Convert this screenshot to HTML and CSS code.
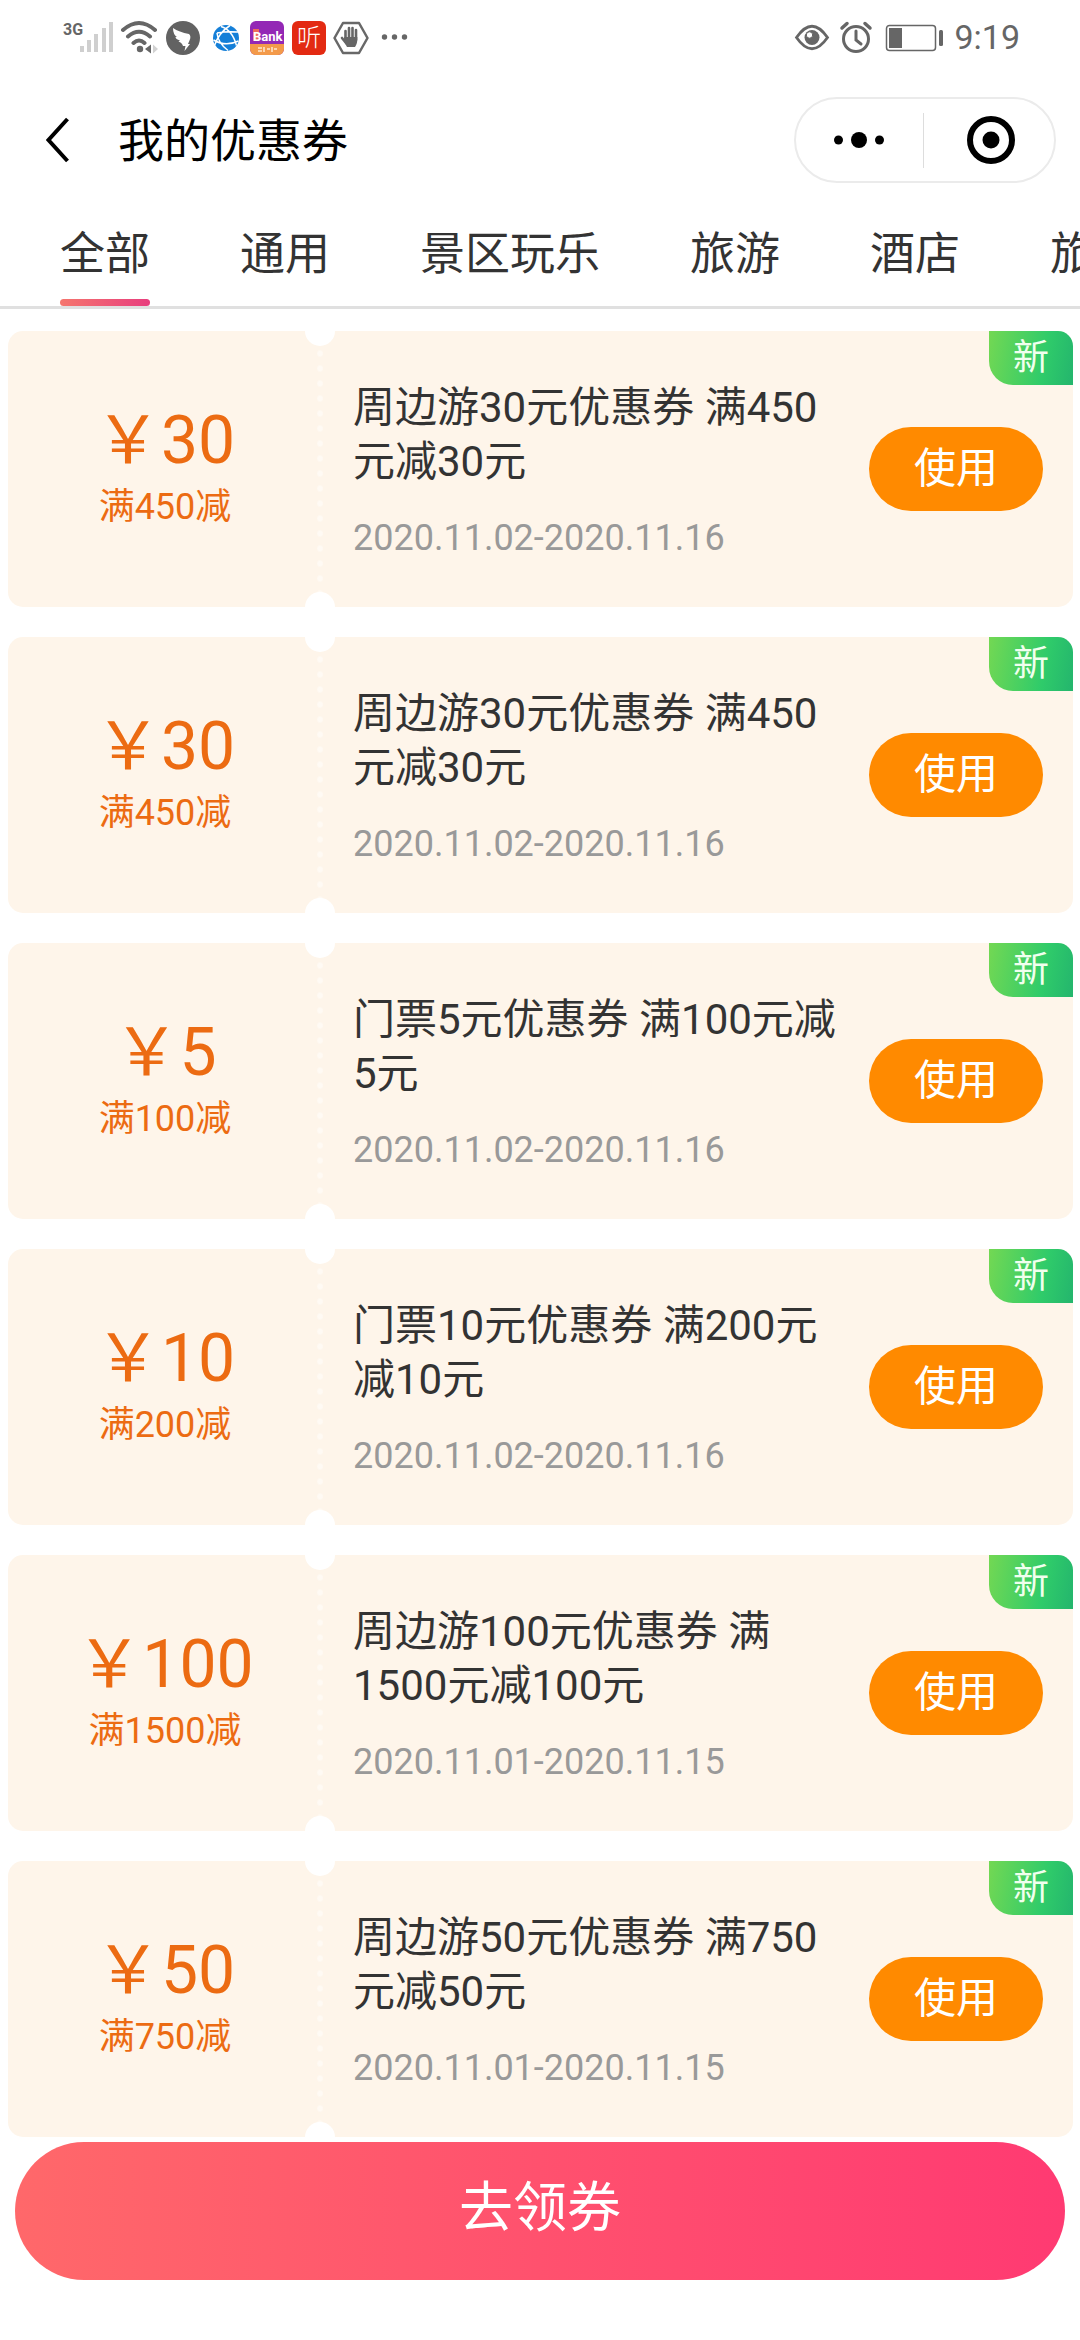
FILE: index.html
```html
<!DOCTYPE html>
<html lang="zh-CN">
<head>
<meta charset="utf-8">
<meta name="viewport" content="width=device-width, initial-scale=1">
<title>我的优惠券</title>
<link rel="stylesheet" href="styles.css">
</head>
<body>
<div class="page">
  <div class="status">
    <svg class="status-left" viewBox="0 0 360 44" width="360" height="44" aria-hidden="true">
      <text x="3" y="20" class="net">3G</text>
      <g fill="#cfcfcf"><path d="M20 31h4v6h-4zM27 25h4v12h-4zM34 19h4v18h-4zM42 13h4v24h-4zM49 7h4v30h-4z"/></g>
      <g fill="none" stroke="#666" stroke-width="4" stroke-linecap="round">
        <path d="M63 15Q79 1 95 15M68 21.500Q79 12 90 21.500M73.500 28Q79 23 84.500 28"/>
      </g>
      <circle cx="80" cy="34" r="3.200" fill="#666"/>
      <path d="M85 34l6-4.500v9z" fill="#666"/><path d="M93 29.500l5 4.500-5 4.500z" fill="#d2d2d2"/>
      <circle cx="123" cy="23" r="17" fill="#626262"/>
      <path d="M113 13q6 4 16 6 2.500 2 .5 6.500l-1.500 3.500h2l-5.500 7 1-5h-2.500q-1-3.500-4.500-4.500l1.500-1q-4.500-1.500-4.500-3.500h1.500q-4-2.500-4-9z" fill="#fff"/>
      <circle cx="166" cy="23" r="13" fill="#147fd8"/>
      <g fill="none" stroke="#fff" stroke-width="1.500"><path d="M170 10.500q-11 7-15.500 20M157 18q1 10 11 17.500M153.500 25q12 7 25 1M161 11.500q11 3 15.500 19M178 17q-11-1-21 1"/></g>
      <rect x="190" y="6" width="34" height="34" rx="6" fill="#9328b5"/>
      <path d="M190 29h34v5a6 6 0 0 1-6 6h-22a6 6 0 0 1-6-6z" fill="#f39a4a"/>
      <path d="M193 14h6v12h-6z" fill="#ee6c5e"/>
      <text x="193" y="26" class="bank">Bank</text>
      <path d="M198 33h4M204 32v5M207 34h3M212 32v5M214 34h3M198 36h4" stroke="#ffe9cf" stroke-width="1.500"/>
      <rect x="232" y="6" width="34" height="34" rx="6" fill="#e32a12"/>
      <text x="237" y="31" class="ting">听</text>
      <path d="M283 8h16l8.500 15-8.500 15h-16l-8.500-15z" fill="none" stroke="#686868" stroke-width="2.500" stroke-linejoin="round"/>
      <path d="M285.500 16v9M289 13v11M292.500 13v11M296 15v10M282 23l4 5" fill="none" stroke="#666" stroke-width="2.600" stroke-linecap="round"/>
      <path d="M284.200 22h13.100q.5 6-2.300 10h-8q-2-3-2.800-6z" fill="#666"/>
      <g fill="#666"><circle cx="324.500" cy="22" r="2.700"/><circle cx="334.500" cy="22" r="2.700"/><circle cx="344.500" cy="22" r="2.700"/></g>
    </svg>
    <div class="status-right">
      <svg viewBox="0 0 150 32" width="150" height="32" aria-hidden="true">
        <g fill="none" stroke="#666" stroke-width="3">
          <path d="M2.500 16.500Q18 -6 33.500 16.500Q18 39 2.500 16.500z" stroke-width="2.800"/>
          <circle cx="62" cy="18" r="12.500"/>
          <path d="M48 7l5-4.500M71 2.500l5 4.500" stroke-linecap="round" stroke-width="3.500"/>
          <path d="M62 10v9l5 4" stroke-linecap="round"/>
          <rect x="92.500" y="4.500" width="49" height="25" rx="3" stroke-width="1.500"/>
        </g>
        <circle cx="18" cy="16.500" r="7.500" fill="#666"/><circle cx="15.500" cy="14" r="3.200" fill="#fff" stroke="#666"/>
        <path d="M95 7h13v20h-13z" fill="#666"/><rect x="145" y="9" width="4" height="16" rx="1.500" fill="#666"/>
      </svg>
      <time class="clock">9:19</time>
    </div>
  </div>

  <header class="bar">
    <button class="back" type="button" aria-label="返回">
      <svg viewBox="0 0 24 46" width="24" height="46"><path d="M21.500 2L2.500 23l19 21" fill="none" stroke="#000" stroke-width="4"/></svg>
    </button>
    <h1 class="title">我的优惠券</h1>
    <div class="capsule">
      <button class="cap-btn" type="button" aria-label="更多">
        <svg viewBox="0 0 50 18" width="50" height="18"><circle cx="4.500" cy="9" r="4.500"/><circle cx="25" cy="9" r="8"/><circle cx="45.500" cy="9" r="4.500"/></svg>
      </button>
      <span class="cap-line"></span>
      <button class="cap-btn cap-close" type="button" aria-label="关闭">
        <svg viewBox="0 0 48 48" width="48" height="48"><circle cx="24" cy="24" r="21" fill="none" stroke="#000" stroke-width="6"/><circle cx="24" cy="24" r="8.500"/></svg>
      </button>
    </div>
  </header>

  <nav class="tabs">
    <a class="tab tab-on" href="#all">全部</a>
    <a class="tab" href="#general">通用</a>
    <a class="tab" href="#scenic">景区玩乐</a>
    <a class="tab" href="#travel">旅游</a>
    <a class="tab" href="#hotel">酒店</a>
    <a class="tab" href="#trip">旅</a>
  </nav>

  <main class="list">
    <article class="coupon">
      <div class="worth"><strong class="price">￥30</strong><span class="rule">满450减</span></div>
      <i class="tear"></i>
      <div class="info"><h2 class="name">周边游30元优惠券 满450元减30元</h2><p class="date">2020.11.02-2020.11.16</p></div>
      <button class="use" type="button">使用</button>
      <span class="badge">新</span>
    </article>
    <article class="coupon">
      <div class="worth"><strong class="price">￥30</strong><span class="rule">满450减</span></div>
      <i class="tear"></i>
      <div class="info"><h2 class="name">周边游30元优惠券 满450元减30元</h2><p class="date">2020.11.02-2020.11.16</p></div>
      <button class="use" type="button">使用</button>
      <span class="badge">新</span>
    </article>
    <article class="coupon">
      <div class="worth"><strong class="price">￥5</strong><span class="rule">满100减</span></div>
      <i class="tear"></i>
      <div class="info"><h2 class="name">门票5元优惠券 满100元减5元</h2><p class="date">2020.11.02-2020.11.16</p></div>
      <button class="use" type="button">使用</button>
      <span class="badge">新</span>
    </article>
    <article class="coupon">
      <div class="worth"><strong class="price">￥10</strong><span class="rule">满200减</span></div>
      <i class="tear"></i>
      <div class="info"><h2 class="name">门票10元优惠券 满200元减10元</h2><p class="date">2020.11.02-2020.11.16</p></div>
      <button class="use" type="button">使用</button>
      <span class="badge">新</span>
    </article>
    <article class="coupon">
      <div class="worth"><strong class="price">￥100</strong><span class="rule">满1500减</span></div>
      <i class="tear"></i>
      <div class="info"><h2 class="name">周边游100元优惠券 满1500元减100元</h2><p class="date">2020.11.01-2020.11.15</p></div>
      <button class="use" type="button">使用</button>
      <span class="badge">新</span>
    </article>
    <article class="coupon">
      <div class="worth"><strong class="price">￥50</strong><span class="rule">满750减</span></div>
      <i class="tear"></i>
      <div class="info"><h2 class="name">周边游50元优惠券 满750元减50元</h2><p class="date">2020.11.01-2020.11.15</p></div>
      <button class="use" type="button">使用</button>
      <span class="badge">新</span>
    </article>
  </main>

  <footer class="foot"><button class="claim" type="button">去领券</button></footer>
</div>
</body>
</html>
```
FILE: styles.css
```css
* { box-sizing: border-box; }
body {
  margin: 0;
  background: #fff;
  color: #333;
  font-family: Roboto, "Noto Sans CJK SC", sans-serif;
}
h1, h2, p { margin: 0; font-weight: 400; }
button { border: 0; padding: 0; background: none; font: inherit; color: inherit; }
svg { display: block; }
.page { overflow-x: clip; }

/* status bar */
.status {
  display: flex;
  justify-content: space-between;
  align-items: center;
  height: 74px;
  padding: 0 60px;
}
.status-right { display: flex; align-items: center; gap: 10px; }
.clock { color: #666; font-size: 34px; line-height: 40px; }
.net { font: 700 16px Roboto, sans-serif; fill: #666; }
.bank { font: 700 13px Roboto, sans-serif; fill: #fff; }
.ting { font: 300 24px "Noto Sans CJK SC", sans-serif; fill: #fff; }

/* title bar */
.bar {
  display: flex;
  align-items: center;
  height: 132px;
  padding: 0 24px 0 46px;
}
.title { flex: 1; margin-left: 48px; padding-top: 2px; color: #000; font-size: 46px; line-height: 60px; }
.capsule {
  display: flex;
  align-items: center;
  width: 262px;
  height: 86px;
  border: 2px solid #ebebeb;
  border-radius: 43px;
}
.cap-btn { display: flex; flex: 1; justify-content: center; }
.cap-close { padding-left: 4px; }
.cap-line { width: 1px; height: 55px; background: #ddd; }

/* category tabs */
.tabs {
  display: flex;
  height: 103px;
  padding: 0 15px;
  overflow: hidden;
  border-bottom: 3px solid #e0e0e0;
}
.tab {
  display: flex;
  flex: none;
  flex-direction: column;
  justify-content: space-between;
  margin: 0 45px;
  padding-top: 19px;
  color: #333;
  font-size: 45px;
  line-height: 60px;
  text-decoration: none;
}
.tab-on::after {
  content: "";
  height: 7px;
  border-radius: 4px;
  background: linear-gradient(90deg, #f5766e, #e83e7e);
}

/* coupons */
.list { display: flex; flex-direction: column; gap: 30px; padding: 22px 7px 0 8px; }
.coupon {
  position: relative;
  display: flex;
  align-items: center;
  min-height: 276px;
  padding-right: 30px;
  border-radius: 15px;
  background: #fef5ea;
}
.worth {
  display: flex;
  flex-direction: column;
  align-items: center;
  width: 309px;
  padding-left: 5px;
  color: #ec6b12;
}
.price { font-size: 66px; font-weight: 400; line-height: 76px; }
.rule { font-size: 36px; line-height: 56px; }
.tear {
  position: relative;
  align-self: stretch;
  width: 6px;
  background: radial-gradient(circle, #fffaf4 2px, transparent 4px) 0 0 / 6px 15px;
}
.tear::before, .tear::after {
  content: "";
  position: absolute;
  left: -12px;
  width: 30px;
  height: 15px;
  background: #fff;
}
.tear::before { top: 0; border-radius: 0 0 15px 15px; }
.tear::after { bottom: 0; border-radius: 15px 15px 0 0; }
.info { flex: 1; padding: 2px 18px 0 30px; }
.name { font-size: 42px; line-height: 54px; }
.date { margin-top: 28px; color: #999; font-size: 36px; line-height: 42px; }
.use {
  width: 174px;
  height: 84px;
  border-radius: 42px;
  background: #ff8a00;
  color: #fff;
  font-size: 42px;
  line-height: 54px;
}
.badge {
  position: absolute;
  top: 0;
  right: 0;
  width: 84px;
  height: 54px;
  border-radius: 0 15px 0 24px;
  background: linear-gradient(100deg, #73d853, #2fcb6a 65%, #24b56d);
  color: #f0ffee;
  font-size: 36px;
  line-height: 54px;
  text-align: center;
}

/* bottom action */
.foot { position: sticky; bottom: 0; padding: 5px 15px 60px; }
.claim {
  display: block;
  width: 100%;
  height: 138px;
  padding-bottom: 4px;
  border-radius: 69px;
  background: linear-gradient(90deg, #ff686a, #ff3a72);
  color: #fff;
  font-size: 54px;
  line-height: 72px;
}
```
